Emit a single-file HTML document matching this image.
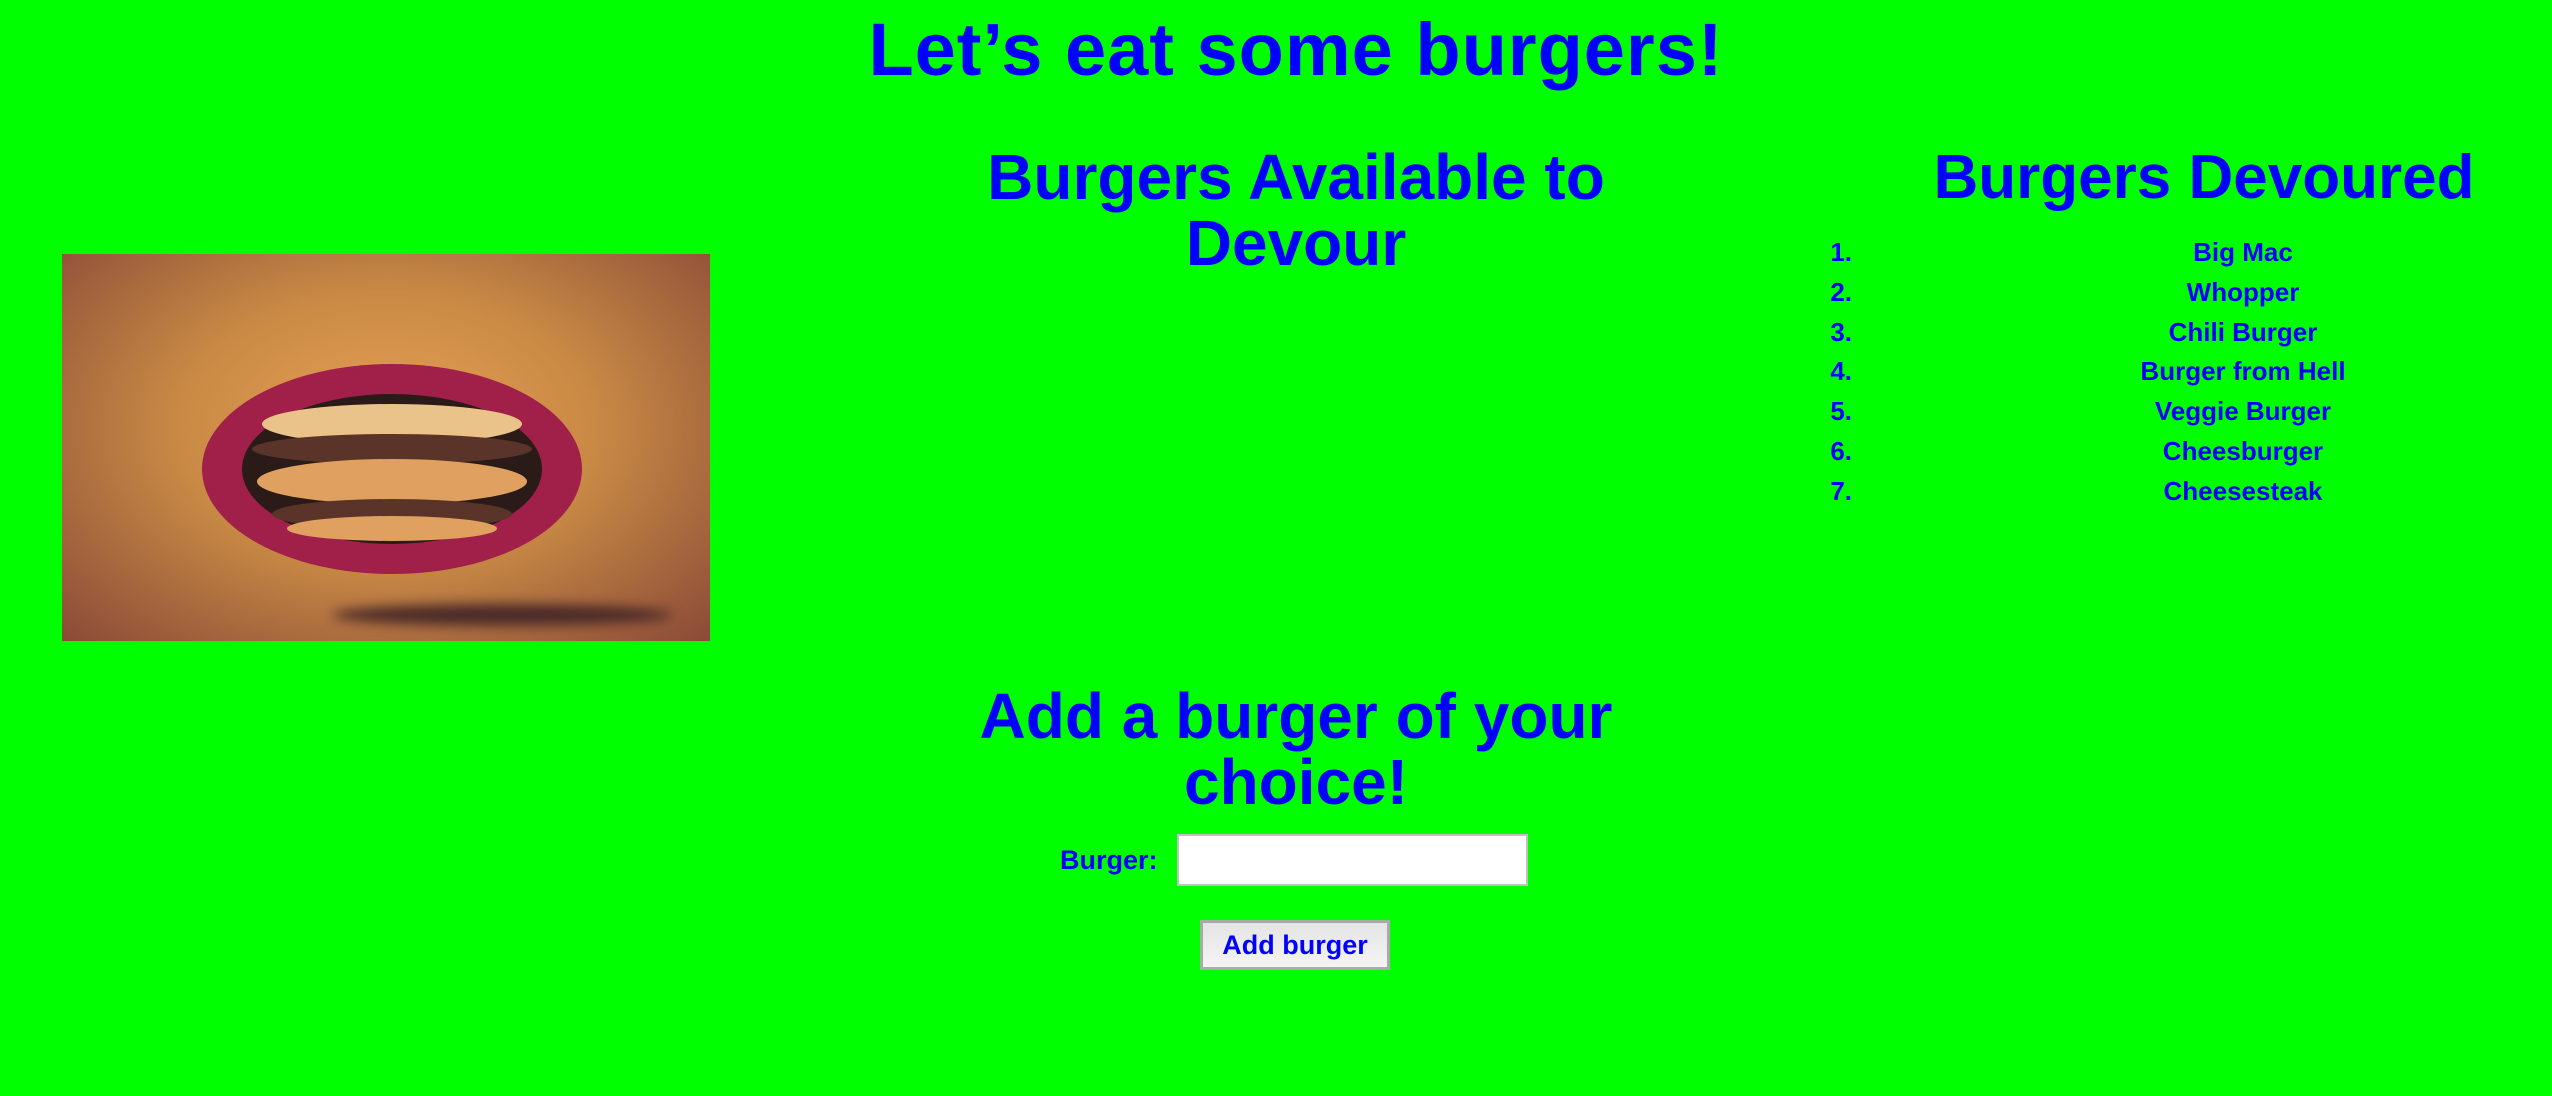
<!DOCTYPE html>
<html><head><meta charset="utf-8"><style>
body{margin:0;width:2552px;height:1096px;background:#00ff00;position:relative;overflow:hidden;font-family:"Liberation Sans",sans-serif;font-weight:bold;color:#0000ff}
.a{position:absolute;white-space:nowrap;text-align:center}
</style></head><body>
<div class="a" style="left:0;width:2592px;top:6px;font-size:74px;line-height:88px;letter-spacing:1px">Let’s eat some burgers!</div>
<div class="a" style="left:896px;width:800px;top:144px;font-size:64px;line-height:66px">Burgers Available to<br>Devour</div>
<div class="a" style="left:1804px;width:800px;top:145px;font-size:62px;line-height:66px">Burgers Devoured</div>
<div style="position:absolute;left:1780px;top:233px;font-size:26px;line-height:39.8px">
<div style="position:absolute;left:0;width:72px;text-align:right">1.<br>2.<br>3.<br>4.<br>5.<br>6.<br>7.</div>
<div style="position:absolute;left:213px;width:500px;text-align:center">Big Mac<br>Whopper<br>Chili Burger<br>Burger from Hell<br>Veggie Burger<br>Cheesburger<br>Cheesesteak</div>
</div>
<div class="a" style="left:896px;width:800px;top:683px;font-size:64px;line-height:66px">Add a burger of your<br>choice!</div>
<div class="a" style="left:1060px;top:840px;font-size:27px;line-height:40px">Burger:</div>
<div style="position:absolute;left:1177px;top:834px;width:347px;height:48px;background:#fff;border:2px solid #c0c0c0"></div>
<div style="position:absolute;left:1200px;top:920px;width:184px;height:44px;background:linear-gradient(#e4e4e4,#f4f4f4);border:3px solid #aaa;font-size:27px;line-height:44px;text-align:center">Add burger</div>
<div style="position:absolute;left:62px;top:254px;width:648px;height:387px;overflow:hidden;background:radial-gradient(ellipse at 50% 45%,#e8a055 0%,#c98a45 45%,#8a4a38 100%)">
<div style="position:absolute;left:270px;top:350px;width:340px;height:22px;border-radius:50%;background:#4a2a28;filter:blur(6px)"></div>
<div style="position:absolute;left:140px;top:110px;width:380px;height:210px;border-radius:50%;background:#a0204a"></div>
<div style="position:absolute;left:180px;top:140px;width:300px;height:150px;border-radius:50%;background:#2a1a18"></div>
<div style="position:absolute;left:200px;top:150px;width:260px;height:40px;border-radius:50%;background:#e9c38a"></div>
<div style="position:absolute;left:190px;top:180px;width:280px;height:30px;border-radius:50%;background:#5a3428"></div>
<div style="position:absolute;left:195px;top:205px;width:270px;height:45px;border-radius:50%;background:#e0a060"></div>
<div style="position:absolute;left:210px;top:245px;width:240px;height:30px;border-radius:50%;background:#5a3428"></div>
<div style="position:absolute;left:225px;top:262px;width:210px;height:25px;border-radius:50%;background:#e0a060"></div>
</div>
</body></html>
